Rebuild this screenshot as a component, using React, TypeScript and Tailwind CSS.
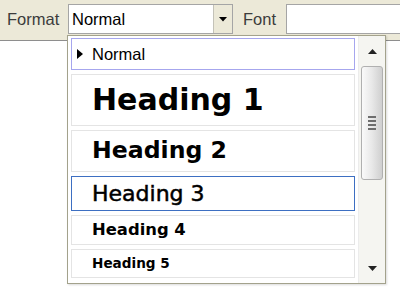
export default function App() {
  const items = [
    { label: "Heading 1", h: "h-[52px]", cls: "text-[30px] font-bold", border: "border-[#e4e4e4]" },
    { label: "Heading 2", h: "h-[42px]", cls: "text-[23.6px] font-bold", border: "border-[#e4e4e4]" },
    { label: "Heading 3", h: "h-[35px]", cls: "text-[22px] font-normal [-webkit-text-stroke:0.5px_#000]", border: "border-[#3d6fc2]" },
    { label: "Heading 4", h: "h-[30px]", cls: "text-[16.4px] font-bold", border: "border-[#e4e4e4]" },
    { label: "Heading 5", h: "h-[29px]", cls: "text-[13.6px] font-bold", border: "border-[#e4e4e4]" },
  ];

  return (
    <div className="relative w-[400px] h-[297px] bg-white overflow-hidden font-['Liberation_Sans',sans-serif]">
      {/* Toolbar */}
      <div className="h-[41px] bg-[#ece9d8] border-b border-[#8e8e8e] flex items-start pt-[4px]">
        <span className="ml-[7px] w-[61px] leading-[30px] text-[16.5px] text-[#3c3c3c]">Format</span>
        <div className="flex h-[30px] w-[165px] border border-[#a5a5a5] bg-white">
          <div className="flex-1 pl-[3px] leading-[28px] text-[16.5px] text-black">Normal</div>
          <div className="w-[19px] border-l border-[#c4c2b8] bg-[#ece9d8] flex items-center justify-center">
            <svg width="8" height="5" viewBox="0 0 8 5">
              <path d="M0 0h8L4 4.5z" fill="#000" />
            </svg>
          </div>
        </div>
        <span className="ml-[10px] w-[43px] leading-[30px] text-[16.5px] text-[#3c3c3c]">Font</span>
        <div className="h-[30px] flex-1 border border-r-0 border-[#a5a5a5] bg-white" />
      </div>

      {/* Dropdown menu */}
      <div className="absolute left-[67px] top-[35px] w-[319px] h-[249px] border border-[#a3a28c] bg-white flex shadow-[1px_1px_2px_rgba(0,0,0,0.15)]">
        <div className="w-[290px] pl-[3px] pt-[2px] flex flex-col gap-[4px] overflow-hidden">
          <div className="h-[32px] w-[284px] shrink-0 border border-[#a6a6ee] flex items-center pl-[5px]">
            <svg width="6" height="10" viewBox="0 0 6 10">
              <path d="M0 0v10l6-5z" fill="#000" />
            </svg>
            <span className="ml-[9px] text-[16.5px] text-black">Normal</span>
          </div>
          {items.map((it) => (
            <div
              key={it.label}
              className={`${it.h} w-[284px] shrink-0 border ${it.border} flex items-center pl-[20px]`}
            >
              <span className={`${it.cls} text-black font-['DejaVu_Sans',sans-serif] leading-none`}>{it.label}</span>
            </div>
          ))}
        </div>

        {/* Scrollbar */}
        <div className="w-[27px] bg-[#f5f5f1] border-l border-[#ececec] flex flex-col items-center">
          <div className="h-[30px] w-full flex items-center justify-center">
            <svg width="9" height="5" viewBox="0 0 9 5">
              <path d="M0 5h9L4.5 0z" fill="#222" />
            </svg>
          </div>
          <div className="h-[114px] w-[22px] rounded-[3px] border border-[#b0b0b0] bg-gradient-to-r from-[#fafafa] via-[#e8e8e8] to-[#cfcfcf] flex flex-col items-center justify-center gap-[2px]">
            <div className="h-[2px] w-[8px] bg-[#6e6e6e]" />
            <div className="h-[2px] w-[8px] bg-[#6e6e6e]" />
            <div className="h-[2px] w-[8px] bg-[#6e6e6e]" />
            <div className="h-[2px] w-[8px] bg-[#6e6e6e]" />
          </div>
          <div className="flex-1" />
          <div className="h-[30px] w-full flex items-center justify-center">
            <svg width="9" height="5" viewBox="0 0 9 5">
              <path d="M0 0h9L4.5 5z" fill="#222" />
            </svg>
          </div>
        </div>
      </div>
    </div>
  );
}
